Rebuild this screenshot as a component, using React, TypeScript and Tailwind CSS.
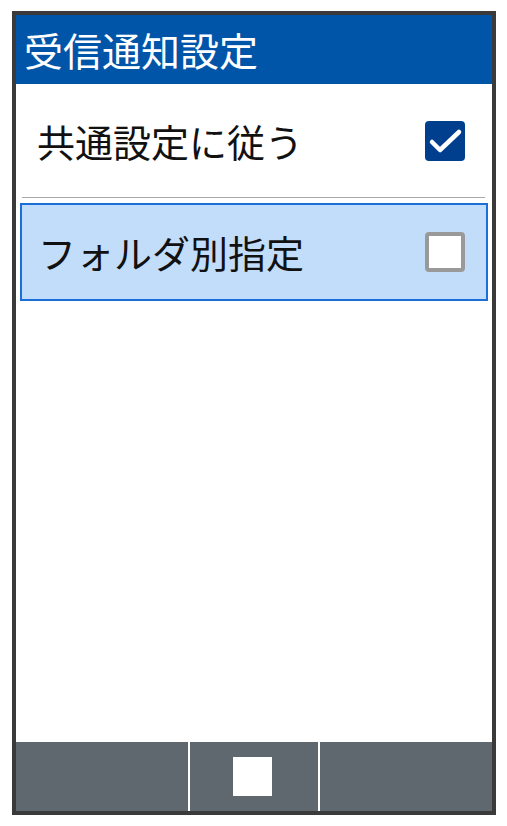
const jp = { fontFamily: '"Noto Sans CJK JP", "Noto Sans", sans-serif' };

function CheckBox({ checked }: { checked: boolean }) {
  if (checked) {
    return (
      <div className="flex h-[40px] w-[40px] items-center justify-center rounded-[4px] bg-[#003f8e]">
        <svg width="40" height="40" viewBox="0 0 40 40" fill="none">
          <path d="M7 21 L15 29 L34 11" stroke="white" strokeWidth="4.5" strokeLinecap="round" strokeLinejoin="round" />
        </svg>
      </div>
    );
  }
  return <div className="h-[40px] w-[40px] rounded-[4px] border-[4px] border-[#999999] bg-white" />;
}

export default function App() {
  return (
    <div className="h-[826px] w-[507px] bg-white pl-[12px] pt-[11px]" style={jp}>
      <div className="flex h-[804px] w-[484px] flex-col border-[4px] border-[#3a3a3a] bg-white">
        <div className="flex h-[69px] items-center bg-[#0055a9] pl-[8px] text-[39px] leading-none text-white">
          受信通知設定
        </div>

        <div className="flex h-[113px] items-center justify-between pl-[21px] pr-[27px]">
          <span className="text-[38px] leading-none text-[#111]">共通設定に従う</span>
          <CheckBox checked />
        </div>
        <div className="ml-[6px] mr-[7px] h-px bg-[#a8a8a8]" />

        <div className="mx-[4px] mt-[5px] flex h-[98px] items-center justify-between border-[2px] border-[#1d6fd8] bg-[#c2ddf9] pl-[16px] pr-[21px]">
          <span className="text-[38px] leading-none text-[#111]">フォルダ別指定</span>
          <CheckBox checked={false} />
        </div>

        <div className="flex-1" />

        <div className="flex h-[69px] bg-[#5f686f]">
          <div className="w-[172px]" />
          <div className="w-[2px] bg-white" />
          <div className="flex w-[128px] items-center justify-center pr-[3px]">
            <div className="h-[39px] w-[39px] bg-white" />
          </div>
          <div className="w-[2px] bg-white" />
          <div className="flex-1" />
        </div>
      </div>
    </div>
  );
}
